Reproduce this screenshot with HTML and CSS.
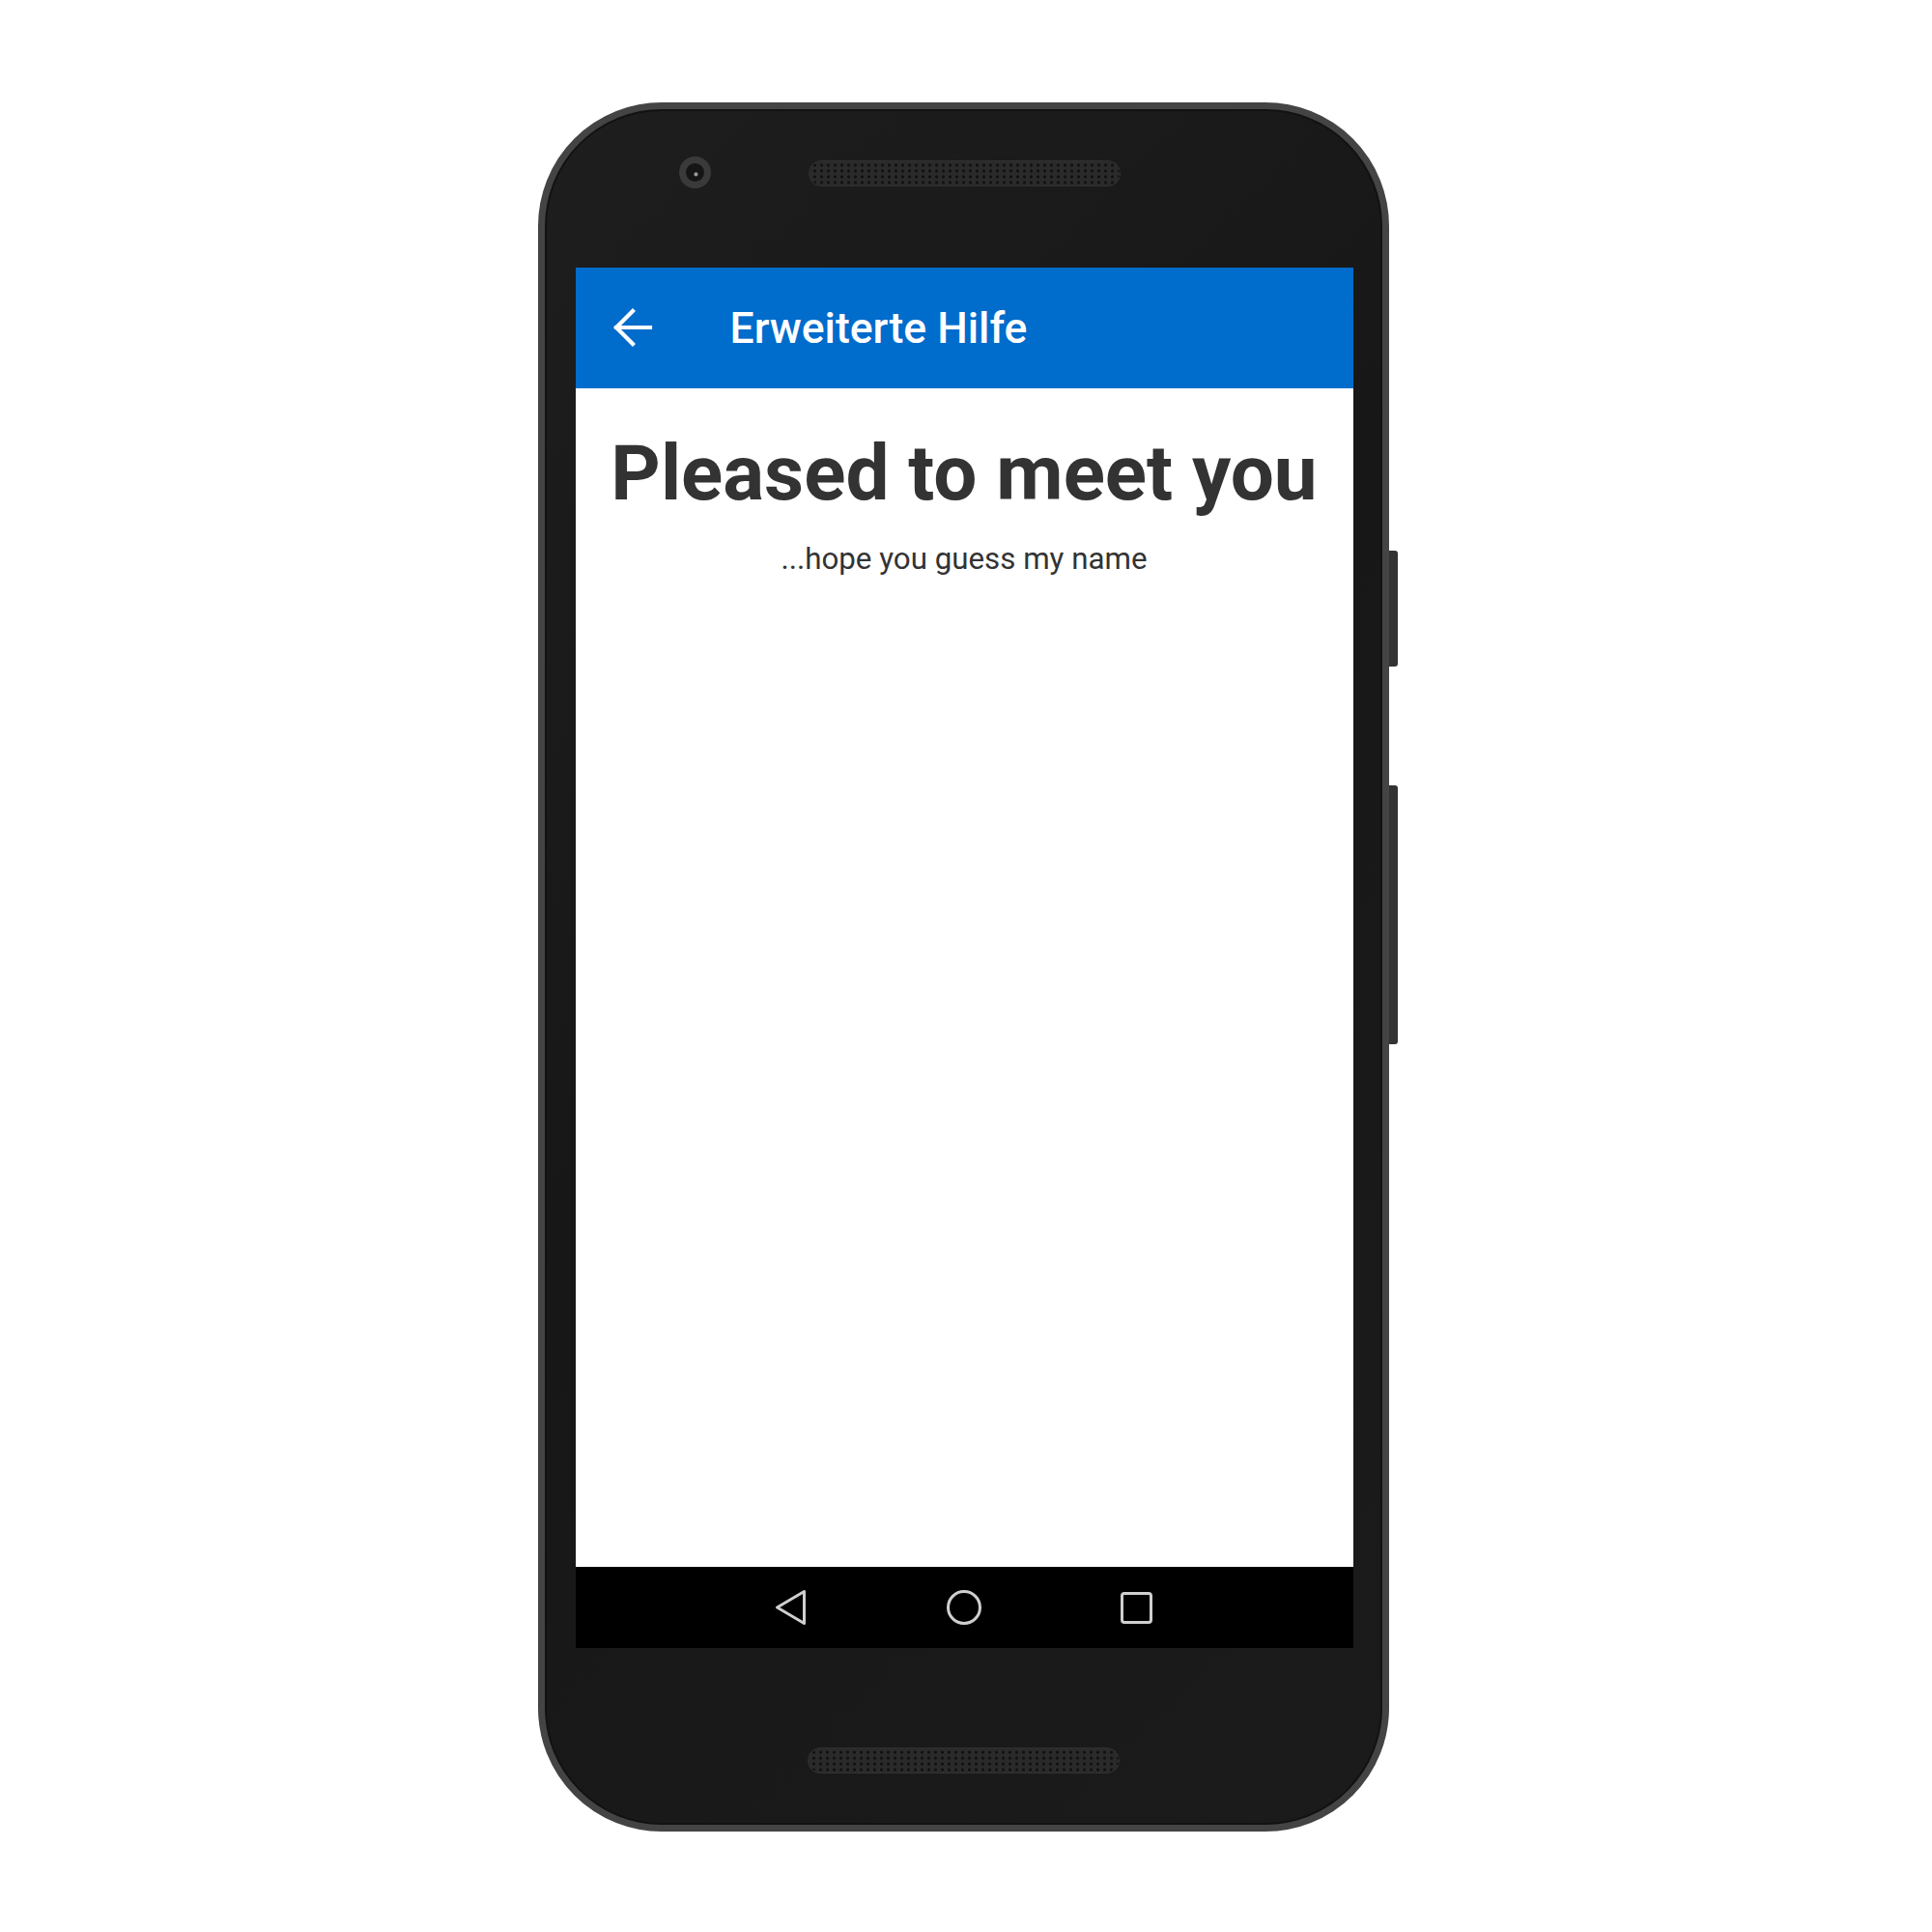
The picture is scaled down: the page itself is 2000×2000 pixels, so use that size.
FILE: index.html
```html
<!DOCTYPE html>
<html lang="de">
<head>
<meta charset="utf-8">
<title>Erweiterte Hilfe</title>
<link rel="stylesheet" href="styles.css">
</head>
<body>
<div class="stage">
  <div class="phone">
    <div class="btn btn-power"></div>
    <div class="btn btn-volume"></div>
    <div class="bezel-top">
      <div class="camera"><div class="lens"></div></div>
      <div class="speaker"></div>
    </div>
    <div class="screen">
      <header class="appbar">
        <svg class="back" viewBox="0 0 54 54" width="54" height="54" aria-hidden="true">
          <path d="M10 27H45 M27 10L10 27L27 44" fill="none" stroke="#ffffff" stroke-width="4.2" stroke-linecap="square" stroke-linejoin="miter"/>
        </svg>
        <h1 class="appbar-title">Erweiterte Hilfe</h1>
      </header>
      <main class="content">
        <h2 class="headline">Pleased to meet you</h2>
        <p class="subline">...hope you guess my name</p>
      </main>
      <nav class="navbar">
        <svg class="nav-icon" viewBox="0 0 48 48" width="48" height="48" aria-hidden="true">
          <polygon points="9.5,24 37.5,7.5 37.5,40.5" fill="none" stroke="#cfcfcf" stroke-width="3" stroke-linejoin="round"/>
        </svg>
        <svg class="nav-icon" viewBox="0 0 48 48" width="48" height="48" aria-hidden="true">
          <circle cx="24" cy="24" r="16.5" fill="none" stroke="#cfcfcf" stroke-width="3"/>
        </svg>
        <svg class="nav-icon" viewBox="0 0 48 48" width="48" height="48" aria-hidden="true">
          <rect x="8.5" y="9.5" width="30" height="30" rx="2.5" fill="none" stroke="#cfcfcf" stroke-width="3"/>
        </svg>
      </nav>
    </div>
    <div class="bezel-bottom">
      <div class="speaker"></div>
    </div>
  </div>
</div>
</body>
</html>
```

FILE: styles.css
```css
html, body {
  margin: 0;
  padding: 0;
  background: #ffffff;
}

.stage {
  width: 2000px;
  height: 2000px;
  display: flex;
  justify-content: center;
  align-items: flex-start;
  padding-top: 106px;
  box-sizing: border-box;
}

.phone {
  position: relative;
  width: 881px;
  height: 1790px;
  box-sizing: border-box;
  border: 7px solid #444444;
  border-radius: 128px;
  background: linear-gradient(135deg, #1e1e1e 0%, #171717 45%, #1b1b1b 100%);
  box-shadow: inset 0 0 0 2px #121212;
  display: flex;
  flex-direction: column;
  margin-left: -6px;
}

.btn {
  position: absolute;
  right: -16px;
  width: 9px;
  background: #333333;
  border-radius: 0 3px 3px 0;
}

.btn-power {
  top: 457px;
  height: 120px;
}

.btn-volume {
  top: 700px;
  height: 268px;
}

.bezel-top {
  height: 164px;
  box-sizing: border-box;
  padding-top: 49px;
  padding-left: 139px;
  display: flex;
  align-items: flex-start;
  gap: 101px;
}

.camera {
  width: 33px;
  height: 33px;
  border-radius: 50%;
  background: #3a3a3a;
  display: flex;
  align-items: center;
  justify-content: center;
}

.lens {
  width: 19px;
  height: 19px;
  border-radius: 50%;
  background: radial-gradient(circle at 55% 60%, #9a9a9a 0 1.5px, #151515 2.5px);
}

.speaker {
  width: 323px;
  height: 27px;
  border-radius: 14px;
  background:
    radial-gradient(circle, #121212 1.3px, transparent 1.9px) 3px 2px / 7px 6px,
    #2a2a2a;
  box-shadow: inset 0 0 0 1px #303030;
}

.bezel-top .speaker {
  margin-top: 4px;
}

.screen {
  margin-left: 32px;
  width: 805px;
  height: 1429px;
  display: flex;
  flex-direction: column;
  background: #ffffff;
}

.appbar {
  height: 125px;
  flex: none;
  background: #006ccb;
  display: flex;
  align-items: center;
  padding-left: 32px;
  gap: 74px;
  box-sizing: border-box;
}

.back {
  display: block;
  flex: none;
  margin-top: -1px;
}

.appbar-title {
  margin: 0;
  font-family: Roboto, "Noto Sans", sans-serif;
  font-weight: 500;
  font-size: 44.5px;
  line-height: 1;
  color: #ffffff;
  margin-top: 2px;
}

.content {
  flex: 1;
  display: flex;
  flex-direction: column;
  align-items: center;
  padding-top: 38px;
  font-family: Roboto, "Noto Sans", sans-serif;
  color: #333333;
}

.headline {
  margin: 0;
  font-size: 80px;
  font-weight: 700;
  line-height: 100px;
  letter-spacing: 0;
}

.subline {
  margin: 20px 0 0;
  font-size: 31.3px;
  font-weight: 400;
  line-height: 38px;
}

.navbar {
  height: 84px;
  flex: none;
  background: #000000;
  display: flex;
  align-items: center;
  justify-content: center;
  gap: 131px;
}

.nav-icon {
  display: block;
}

.bezel-bottom {
  flex: 1;
  display: flex;
  justify-content: center;
  padding-top: 103px;
}
```
